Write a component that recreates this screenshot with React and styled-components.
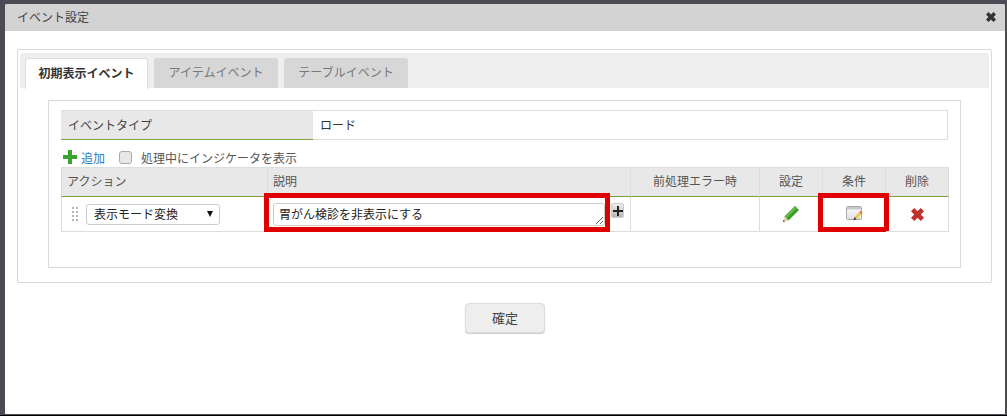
import React from 'react';
import styled, { createGlobalStyle } from 'styled-components';

const GlobalStyle = createGlobalStyle`
  html, body { margin: 0; padding: 0; background: #fff; }
  body {
    font-family: "Liberation Sans", "Noto Sans CJK JP", sans-serif;
    font-size: 12px;
    color: #333;
  }
`

const Backdrop = styled.div`
  width: 1007px;
  height: 416px;
  box-sizing: border-box;
  background: #4b4a55;
  padding: 4px 2px 1px 5px;
  overflow: hidden;
  border-bottom: 1px solid #000;
`

const Dialog = styled.div`
  height: 100%;
  background: #fff;
  border-top-left-radius: 2px;
  border-top-right-radius: 2px;
  overflow: hidden;
`

const TitleBar = styled.div`
  height: 27px;
  box-sizing: border-box;
  background: #d3d3d3;
  display: flex;
  align-items: center;
  justify-content: space-between;
  padding: 0 9px 2px 12px;
  color: #444;
  font-size: 12px;
`

const Content = styled.div`
  padding: 18px 13px 0 12px;
`

const Panel = styled.div`
  height: 234px;
  box-sizing: border-box;
  border: 1px solid #d9d9d9;
  border-radius: 2px;
  padding: 3px 2px;
`

const TabBar = styled.div`
  height: 31px;
  padding: 4px 0 0 5px;
  background: #eeeeee;
  border-radius: 3px 3px 0 0;
  display: flex;
  gap: 6px;
  align-items: flex-end;
`

const Tab = styled.div`
  width: ${p => (p.$active ? 123 : 124)}px;
  height: ${p => (p.$active ? 31 : 30)}px;
  box-sizing: border-box;
  background: ${p => (p.$active ? '#fff' : '#d7d7d7')};
  color: ${p => (p.$active ? '#333' : '#777')};
  font-weight: ${p => (p.$active ? 700 : 400)};
  border: ${p => (p.$active ? '1px solid #ddd' : '0')};
  border-bottom: 0;
  border-radius: 3px 3px 0 0;
  display: flex;
  align-items: center;
  justify-content: center;
  padding-bottom: 4px;
  font-size: 12px;
  margin-bottom: ${p => (p.$active ? -1 : 0)}px;
`

const Inner = styled.div`
  margin: 12px 28px 0 28px;
  height: 168px;
  box-sizing: border-box;
  border: 1px solid #d9d9d9;
  padding: 9px 12px 0 12px;
`

const TypeRow = styled.div`
  display: flex;
  height: 30px;
  box-sizing: border-box;
  border: 1px solid #ddd;
  border-left: 0;
`

const TypeLabel = styled.div`
  width: 252px;
  box-sizing: border-box;
  background: #e8e8e8;
  border-bottom: 1px solid #7da23c;
  margin-bottom: -1px;
  display: flex;
  align-items: center;
  padding: 0 0 2px 7px;
  color: #444;
`

const TypeValue = styled.div`
  flex: 1;
  display: flex;
  align-items: center;
  padding: 0 0 2px 7px;
  color: #333;
`

const ActionBar = styled.div`
  height: 27px;
  display: flex;
  align-items: center;
  padding: 8px 0 1px 2px;
  box-sizing: border-box;
`

const AddLink = styled.a`
  color: #2a7bc8;
  margin-left: 4px;
  margin-right: 14px;
`

const FakeCheck = styled.span`
  width: 11px;
  height: 11px;
  background: #e8e8e8;
  border: 1px solid #aaa;
  border-radius: 3px;
  margin-right: 9px;
`

const CheckText = styled.span`
  color: #555;
`

const Table = styled.div`
  display: grid;
  grid-template-columns: 207px 363px 129px 63px 63px 63px;
  width: 888px;
`

const HeadCell = styled.div`
  height: 30px;
  box-sizing: border-box;
  background: #e8e8e8;
  border-top: 1px solid #ddd;
  border-right: 1px solid #ddd;
  border-left: ${p => (p.$first ? '1px solid #ddd' : '0')};
  border-bottom: 1px solid #7da23c;
  display: flex;
  align-items: center;
  justify-content: ${p => (p.$left ? 'flex-start' : 'center')};
  padding: 0 0 3px ${p => (p.$left ? 5 : 0)}px;
  color: #555;
`

const BodyCell = styled.div`
  position: relative;
  height: 35px;
  box-sizing: border-box;
  border-right: 1px solid #ddd;
  border-left: ${p => (p.$first ? '1px solid #ddd' : '0')};
  border-bottom: 1px solid #ddd;
  display: flex;
  align-items: center;
  justify-content: ${p => (p.$left ? 'flex-start' : 'center')};
`

const Grip = styled.span`
  width: 7px;
  height: 15px;
  margin: 0 7px 0 10px;
  background-image: linear-gradient(#b5b5b5 2px, transparent 2px);
  background-size: 100% 4px;
  mask-image: repeating-linear-gradient(90deg, #000 0 2px, transparent 2px 4px);
`

const SelectBox = styled.div`
  width: 134px;
  height: 21px;
  box-sizing: border-box;
  border: 1px solid #ccc;
  border-radius: 3px;
  background: #fff;
  display: flex;
  align-items: center;
  justify-content: space-between;
  padding: 0 5px 2px 7px;
  color: #222;
`

const Caret = styled.span`
  width: 0;
  height: 0;
  border-left: 3.5px solid transparent;
  border-right: 3.5px solid transparent;
  border-top: 6px solid #111;
  margin: 2px 1px 0 0;
`

const DescWrap = styled.div`
  margin-left: 5px;
  width: 332px;
  height: 23px;
  box-sizing: border-box;
  border: 1px solid #ccc;
  border-radius: 3px;
  background: #fff;
  display: flex;
  align-items: center;
  padding: 0 0 2px 5px;
  color: #222;
  position: relative;
`

const ResizeGrip = styled.svg`
  position: absolute;
  right: 0;
  bottom: 0;
`

const PlusButton = styled.div`
  position: absolute;
  left: 343px;
  top: 6px;
  width: 13px;
  height: 15px;
  box-sizing: border-box;
  background: linear-gradient(#eeeeee, #b5b5b5);
  border: 1px solid #ccc;
  border-radius: 2px;
  display: flex;
  align-items: center;
  justify-content: center;
`

const Highlight = styled.div`
  position: absolute;
  top: -4px;
  bottom: -1px;
  left: ${p => p.$left}px;
  right: ${p => p.$right}px;
  border: 5px solid #e00000;
  pointer-events: none;
`

const Footer = styled.div`
  display: flex;
  justify-content: center;
  padding: 20px 0 0 1px;
`

const ConfirmButton = styled.div`
  width: 80px;
  height: 30px;
  box-sizing: border-box;
  background: #eee;
  border: 1px solid #ddd;
  border-radius: 4px;
  box-shadow: 0 1px 1px #ccc;
  display: flex;
  align-items: center;
  justify-content: center;
  padding-bottom: 2px;
  font-size: 13px;
  color: #444;
`

const CrossIcon = ({ color, size }) => (
  <svg width={size} height={size} viewBox="0 0 12 12">
    <path d="M3 0 6 3 9 0 12 3 9 6 12 9 9 12 6 9 3 12 0 9 3 6 0 3Z" fill={color} />
  </svg>
);

const PlusIcon = () => (
  <svg width="14" height="14" viewBox="0 0 14 14">
    <path d="M5 0H9V5H14V9H9V14H5V9H0V5H5Z" fill="#3aa52e" />
  </svg>
);

const PencilIcon = () => (
  <svg width="16" height="16" viewBox="0 0 16 16">
    <path d="M12 0 16 4 5.5 14.5 1.5 10.5Z" fill="#3c9a2c" />
    <path d="M12 0 14 2 3.5 12.5 1.5 10.5Z" fill="#62b84c" />
    <path d="M1.5 10.5 5.5 14.5 0 16Z" fill="#e2d3b0" />
    <path d="M0.6 14 2 15.4 0 16Z" fill="#333" />
  </svg>
);

const NoteIcon = () => (
  <svg width="17" height="16" viewBox="0 0 17 16">
    <defs>
      <linearGradient id="noteFill" x1="0" y1="0" x2="0" y2="1">
        <stop offset="0" stopColor="#ffffff" />
        <stop offset="1" stopColor="#dedede" />
      </linearGradient>
    </defs>
    <rect x="0.5" y="0.5" width="15" height="13" rx="1" fill="url(#noteFill)" stroke="#a8a8a8" />
    <rect x="1" y="1" width="14" height="2.5" fill="#c9c9c9" />
    <path d="M14.5 5 16.5 7 10.5 13 8.5 11Z" fill="#f2c84b" />
    <path d="M14.5 5 16.5 7 15.5 8 13.5 6Z" fill="#d9534f" />
    <path d="M8.5 11 10.5 13 7.5 14.5Z" fill="#333" />
  </svg>
);

const App = () => (
  <Backdrop>
    <GlobalStyle />
    <Dialog>
      <TitleBar>
        <span>イベント設定</span>
        <CrossIcon color="#333" size={10} />
      </TitleBar>
      <Content>
        <Panel>
          <TabBar>
            <Tab $active>初期表示イベント</Tab>
            <Tab>アイテムイベント</Tab>
            <Tab>テーブルイベント</Tab>
          </TabBar>
          <Inner>
            <TypeRow>
              <TypeLabel>イベントタイプ</TypeLabel>
              <TypeValue>ロード</TypeValue>
            </TypeRow>
            <ActionBar>
              <PlusIcon />
              <AddLink>追加</AddLink>
              <FakeCheck />
              <CheckText>処理中にインジケータを表示</CheckText>
            </ActionBar>
            <Table>
              <HeadCell $first $left>アクション</HeadCell>
              <HeadCell $left>説明</HeadCell>
              <HeadCell>前処理エラー時</HeadCell>
              <HeadCell>設定</HeadCell>
              <HeadCell>条件</HeadCell>
              <HeadCell>削除</HeadCell>

              <BodyCell $first $left>
                <Grip />
                <SelectBox>表示モード変換<Caret /></SelectBox>
              </BodyCell>
              <BodyCell $left>
                <DescWrap>
                  胃がん検診を非表示にする
                  <ResizeGrip width="9" height="9" viewBox="0 0 9 9">
                    <path d="M1 8 8 1M5 8 8 5" stroke="#666" strokeWidth="1" />
                  </ResizeGrip>
                </DescWrap>
                <PlusButton>
                  <svg width="10" height="10" viewBox="0 0 10 10">
                    <path d="M4 0H6V4H10V6H6V10H4V6H0V4H4Z" fill="#222" />
                  </svg>
                </PlusButton>
                <Highlight $left={-4} $right={20} />
              </BodyCell>
              <BodyCell />
              <BodyCell><PencilIcon /></BodyCell>
              <BodyCell>
                <NoteIcon />
                <Highlight $left={-5} $right={-4} />
              </BodyCell>
              <BodyCell><CrossIcon color="#c0302c" size={13} /></BodyCell>
            </Table>
          </Inner>
        </Panel>
        <Footer>
          <ConfirmButton>確定</ConfirmButton>
        </Footer>
      </Content>
    </Dialog>
  </Backdrop>
);

export default App;
